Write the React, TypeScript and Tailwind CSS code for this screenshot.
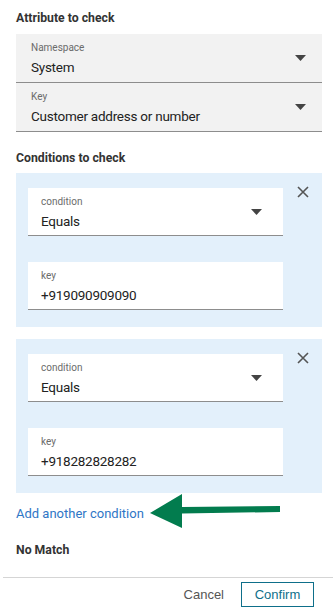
const font = { fontFamily: 'Roboto, "Noto Sans", Arial, sans-serif' };

function Caret() {
  return (
    <svg width="11" height="6" viewBox="0 0 11 6" className="shrink-0">
      <path d="M0 0h11L5.5 6z" fill="#444" />
    </svg>
  );
}

function CloseIcon() {
  return (
    <svg width="12" height="12" viewBox="0 0 12 12">
      <path d="M1 1l10 10M11 1L1 11" stroke="#555" strokeWidth="1.6" />
    </svg>
  );
}

function GrayField({ label, value }: { label: string; value: string }) {
  return (
    <div className="flex h-[49px] items-center justify-between border-b border-[#8d8d8d] bg-[#f2f2f2] pl-[15px] pr-[16px]">
      <div className="flex flex-col pt-[2px]">
        <span className="text-[10px] leading-[12px] text-[#6b6b6b]">{label}</span>
        <span className="mt-[5px] text-[13.5px] leading-[17px] tracking-[-0.25px] text-[#222]">{value}</span>
      </div>
      <Caret />
    </div>
  );
}

function WhiteField({ label, value, select }: { label: string; value: string; select?: boolean }) {
  return (
    <div className="flex h-[48px] items-center justify-between border-b border-[#8d8d8d] bg-white pl-[13px] pr-[21px]">
      <div className="flex flex-col pt-[2px]">
        <span className="text-[10px] leading-[12px] text-[#6b6b6b]">{label}</span>
        <span className="mt-[5px] text-[13.5px] leading-[17px] tracking-[-0.25px] text-[#222]">{value}</span>
      </div>
      {select && <Caret />}
    </div>
  );
}

function ConditionCard({ value }: { value: string }) {
  return (
    <div className="flex h-[154px] items-start bg-[#e3f0fb] pl-[12px] pt-[15px]">
      <div className="flex w-[255px] flex-col gap-[26px]">
        <WhiteField label="condition" value="Equals" select />
        <WhiteField label="key" value={value} />
      </div>
      <div className="ml-[14px] mt-[-2px]">
        <CloseIcon />
      </div>
    </div>
  );
}

export default function App() {
  const conditions = ["+919090909090", "+918282828282"];

  return (
    <div className="h-[616px] w-[333px] overflow-hidden bg-white" style={font}>
      <div className="pl-[16px] pr-[11px]">
        <h3 className="pt-[9px] text-[12.25px] font-bold leading-[18px] text-[#333]">Attribute to check</h3>
        <div className="mt-[7px]">
          <GrayField label="Namespace" value="System" />
          <GrayField label="Key" value="Customer address or number" />
        </div>

        <h3 className="mt-[17px] text-[12.25px] font-bold leading-[18px] text-[#333]">Conditions to check</h3>
        <div className="mt-[6px] flex flex-col gap-[12px]">
          {conditions.map((c) => (
            <ConditionCard key={c} value={c} />
          ))}
        </div>

        <div className="relative mt-[12px] flex items-center">
          <span className="text-[13px] leading-[18px] text-[#2f76c6]">Add another condition</span>
          {/* pointer arrow */}
          <svg width="132" height="36" viewBox="0 0 132 36" className="absolute left-[134px] top-[-11px]">
            <path d="M0 19L32 0V13L130 12V18L32 19.5V34z" fill="#027c4e" />
          </svg>
        </div>

        <h3 className="mt-[18px] text-[12.25px] font-bold leading-[18px] text-[#333]">No Match</h3>
      </div>

      <div className="ml-[3px] mt-[18px] border-t border-[#d5d5d5]">
        <div className="flex items-center justify-end gap-[17px] pr-[19px] pt-[4px]">
          <span className="text-[13px] text-[#555]" style={{ fontFamily: '"Liberation Sans", Arial, sans-serif' }}>Cancel</span>
          <button
            className="h-[25px] w-[73px] border border-[#0e6f8a] text-[13px] text-[#0e6f8a]"
            style={{ fontFamily: '"Liberation Sans", Arial, sans-serif' }}
          >
            Confirm
          </button>
        </div>
      </div>
    </div>
  );
}
